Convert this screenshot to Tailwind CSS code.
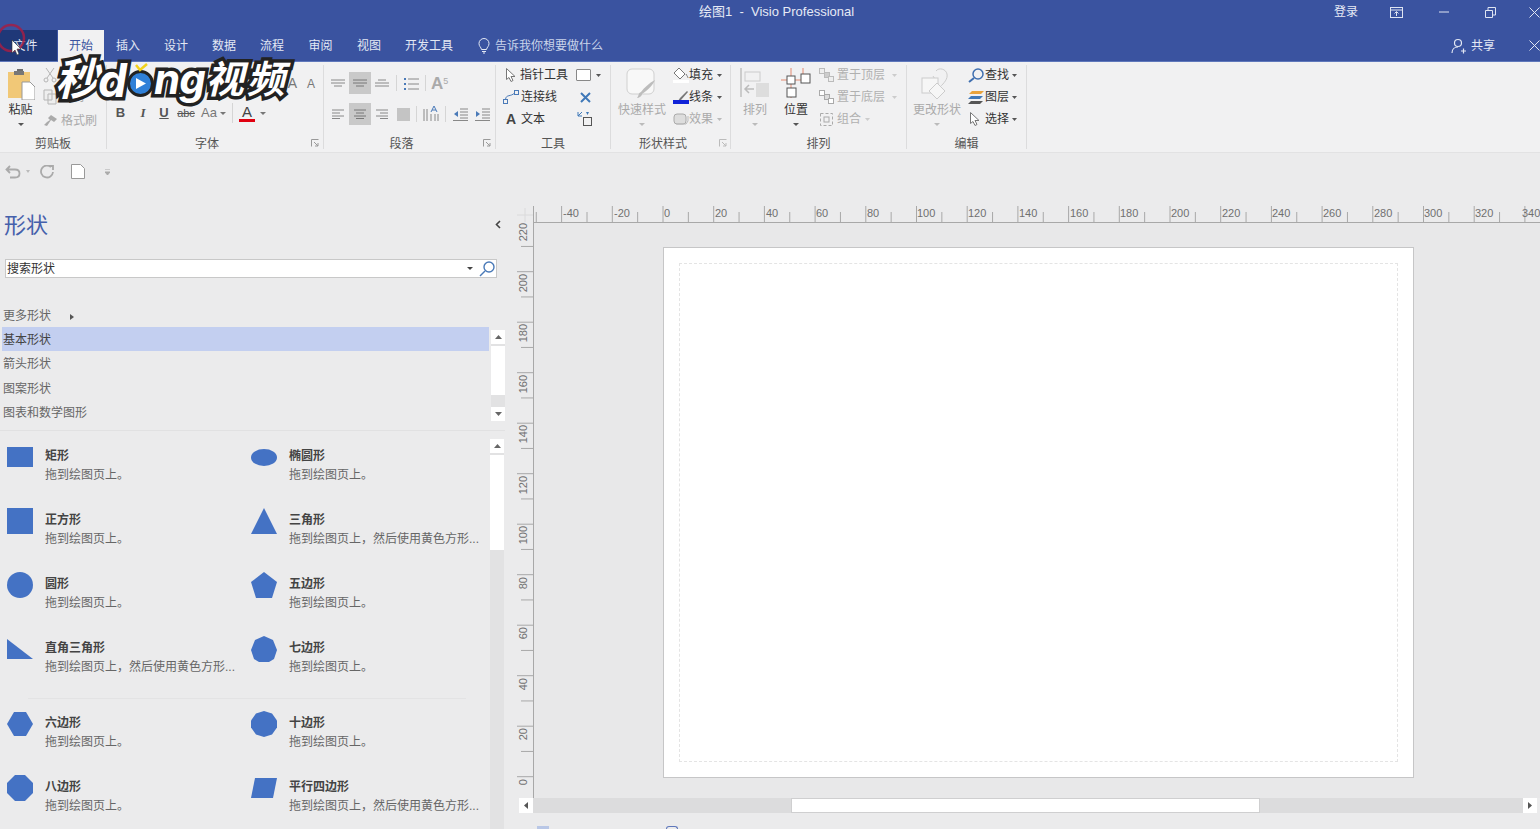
<!DOCTYPE html>
<html lang="zh">
<head>
<meta charset="utf-8">
<title>绘图1 - Visio Professional</title>
<script src="https://cdn.jsdelivr.net/npm/@tailwindcss/browser@4"></script>
</head>
<body class="w-[1540px] h-[829px] overflow-hidden relative bg-[#ebebec] font-['Liberation_Sans','Noto_Sans_CJK_SC',sans-serif] text-[12px] text-[#444]">

<!-- title bar -->
<header class="h-[30px] bg-[#3a53a0] flex items-center pb-[6px] text-[#e6eaf5] text-[13px] relative">
  <div class="w-[699px]"></div>
  <div class="w-[624px] whitespace-pre">绘图1  -  Visio Professional</div>
  <div class="w-[46px] text-center text-[12px]">登录</div>
  <div class="w-[27px] ml-[14px] flex justify-center"><svg width="13" height="11" viewBox="0 0 13 11" fill="none" stroke="#dfe5f2"><rect x=".5" y=".5" width="12" height="10"/><path d="M.5 3h12M6.500 9V5M4.500 6.500l2-2 2 2"/></svg></div>
  <div class="w-[11px]"></div>
  <div class="w-[46px] flex justify-center"><svg width="10" height="2"><path d="M0 1h10" stroke="#dfe5f2"/></svg></div>
  <div class="w-[46px] flex justify-center"><svg width="11" height="11" fill="none" stroke="#dfe5f2"><path d="M.5 3.500h7v7h-7zM3 3V.5h7.500V8H8"/></svg></div>
  <div class="flex-1 flex justify-end"><svg width="11" height="11" stroke="#dfe5f2"><path d="M.5.500l10 10M10.500.500l-10 10"/></svg></div>
</header>

<!-- tabs -->
<nav class="h-[32px] bg-[#3a53a0] flex items-stretch text-[#e3e8f4] border-b border-[#5f78bb]">
  <div class="w-[57px] bg-[#1f3878] flex items-center justify-center pr-[6px]">文件</div>
  <div class="w-px"></div>
  <div class="w-[46px] bg-[#f1f1f2] text-[#3a53a0] flex items-center justify-center h-[32px]">开始</div>
  <div class="w-[48px] flex items-center justify-center">插入</div>
  <div class="w-[48px] flex items-center justify-center">设计</div>
  <div class="w-[48px] flex items-center justify-center">数据</div>
  <div class="w-[48px] flex items-center justify-center">流程</div>
  <div class="w-[49px] flex items-center justify-center">审阅</div>
  <div class="w-[48px] flex items-center justify-center">视图</div>
  <div class="w-[72px] flex items-center justify-center">开发工具</div>
  <div class="ml-[13px] flex items-center gap-[5px] text-[#c9d3ea]">
    <svg width="12" height="16" viewBox="0 0 12 16" fill="none" stroke="#e3e8f4"><path d="M3.500 11.500C3 9 1 8.500 1 5.500a5 5 0 0 1 10 0c0 3-2 3.500-2.500 6zM4 13.500h4M5 15h2"/></svg>
    <span>告诉我你想要做什么</span>
  </div>
  <div class="ml-auto flex items-center gap-[4px] w-[74px] text-[#e3e8f4]">
    <svg width="16" height="16" viewBox="0 0 16 16" fill="none" stroke="#e3e8f4" stroke-width="1.200"><circle cx="7" cy="5" r="3.500"/><path d="M1 15c0-4 3-6 6-6M10 13h5M12.500 10.500v5"/></svg>
    <span>共享</span>
  </div>
  <div class="w-[15px] flex items-center justify-end"><svg width="11" height="11" stroke="#dfe5f2"><path d="M.5.500l10 10M10.500.500l-10 10"/></svg></div>
</nav>

<!-- ribbon -->
<section class="h-[91px] bg-[#f1f1f2] flex py-[3px] border-b border-[#e2e2e3]">

  <!-- clipboard -->
  <div class="w-[107px] flex flex-col border-r border-[#dcdcdd]">
    <div class="h-[72px] shrink-0 flex">
      <div class="w-[40px] flex flex-col items-center pl-[1px] pt-[3px]">
        <svg width="28" height="32" viewBox="0 0 28 32"><path d="M10 1h6v3h4v3H6V4h4z" fill="#6d6d6d"/><rect x="1" y="4" width="22" height="26" fill="#f1c877"/><rect x="7" y="3" width="10" height="4" fill="#777"/><path d="M15 14h8l5 5v13H15z" fill="#fff" stroke="#999"/></svg>
        <div class="mt-[1px] leading-[18px] text-[#333]">粘贴</div>
        <svg class="mt-[4px]" width="6" height="3"><path d="M0 0h6L3 3z" fill="#555"/></svg>
      </div>
      <div class="flex flex-col -mt-px text-[#aaa]">
        <div class="h-[22px] flex items-center gap-[3px] pl-[3px]"><svg width="14" height="16" viewBox="0 0 14 16" fill="none" stroke="#b5b5b5"><path d="M3 1l7 10M11 1L4 11"/><circle cx="3" cy="13" r="2"/><circle cx="11" cy="13" r="2"/></svg><span>剪切</span></div>
        <div class="h-[22px] flex items-center gap-[3px] pl-[3px]"><svg width="14" height="16" viewBox="0 0 14 16" fill="#eee" stroke="#b5b5b5"><path d="M1 1h8v10H1zM5 5h8v10H5z"/></svg><span>复制</span></div>
        <div class="h-[22px] mt-[2px] flex items-center gap-[4px] pl-[3px]"><svg width="14" height="12" viewBox="0 0 14 12" fill="#aaa"><path d="M8 0l6 4-3 3-3-2-2 3-2 3-3-1 3-3 3-2-2-2z"/></svg><span>格式刷</span></div>
      </div>
    </div>
    <div class="shrink-0 text-center leading-[14px] text-[#555]">剪贴板</div>
  </div>

  <!-- font -->
  <div class="w-[217px] flex flex-col border-r border-[#dcdcdd] relative">
    <div class="h-[72px] shrink-0 flex flex-col">
      <div class="h-[31px] flex items-center justify-end gap-[10px] pr-[8px] pt-[6px] text-[14px] text-[#777]"><span>A</span><span class="text-[12px]">A</span></div>
      <div class="h-[34px] flex items-center pl-[2px] text-[13px] text-[#555]">
        <b class="w-[23px] text-center">B</b>
        <i class="w-[22px] text-center font-bold font-['Liberation_Serif',serif]">I</i>
        <u class="w-[20px] text-center font-bold">U</u>
        <s class="w-[24px] text-center text-[11px]">abc</s>
        <span class="w-[22px] text-center text-[#777]">Aa</span>
        <svg width="6" height="3"><path d="M0 0h6L3 3z" fill="#777"/></svg>
        <div class="w-px h-[20px] bg-[#d5d5d5] ml-[6px]"></div>
        <span class="ml-[6px] w-[16px] flex flex-col items-center text-[15px] leading-[14px] text-[#444]">A<span class="block w-[16px] h-[3px] bg-[#e00010]"></span></span>
        <svg class="ml-[5px]" width="6" height="3"><path d="M0 0h6L3 3z" fill="#777"/></svg>
      </div>
    </div>
    <div class="shrink-0 flex leading-[14px] text-[#555]"><span class="w-[200px] text-center">字体</span><svg class="ml-[4px] mt-[2px]" width="8" height="8" fill="none" stroke="#999"><path d="M.5 7.500v-7h7M3 3l4 4M7 4v3H4"/></svg></div>
  </div>

  <!-- paragraph -->
  <div class="w-[172px] flex flex-col border-r border-[#dcdcdd]">
    <div class="h-[72px] shrink-0 flex flex-col pl-[3px]">
      <div class="h-[22px] mt-[7px] flex items-center text-[#888]">
        <div class="w-[22px] flex justify-center"><svg width="14" height="9" stroke="#888"><path d="M0 1h14M0 4h14M3 7h8" fill="none"/></svg></div>
        <div class="w-[22px] h-[22px] bg-[#c9c9c9] flex items-center justify-center"><svg width="14" height="9" stroke="#777"><path d="M0 1h14M0 4h14M3 7h8"/></svg></div>
        <div class="w-[22px] flex justify-center"><svg width="14" height="9" stroke="#888"><path d="M3 1h8M0 4h14M0 7h14"/></svg></div>
        <div class="w-px h-[16px] bg-[#d5d5d5] ml-[3px]"></div>
        <div class="w-[28px] flex justify-center"><svg width="15" height="13"><path d="M0 1h2v2H0zM0 6h2v2H0zM0 11h2v2H0z" fill="#4a7ab8"/><path d="M4 2h11M4 7h11M4 12h11" stroke="#888"/></svg></div>
        <div class="w-px h-[16px] bg-[#d5d5d5]"></div>
        <div class="ml-[5px] text-[17px] font-bold text-[#aaa] leading-none">A<sup class="text-[9px] font-normal">5</sup></div>
      </div>
      <div class="h-[22px] mt-[9px] flex items-center">
        <div class="w-[22px] flex justify-center"><svg width="12" height="10" stroke="#888"><path d="M0 1h12M0 4h8M0 7h12M0 9.500h8"/></svg></div>
        <div class="w-[22px] h-[22px] bg-[#c9c9c9] flex items-center justify-center"><svg width="12" height="10" stroke="#777"><path d="M0 1h12M2 4h8M0 7h12M2 9.500h8"/></svg></div>
        <div class="w-[22px] flex justify-center"><svg width="12" height="10" stroke="#888"><path d="M0 1h12M4 4h8M0 7h12M4 9.500h8"/></svg></div>
        <div class="w-[20px] flex justify-center"><div class="w-[13px] h-[13px] bg-[#c4c4c4]"></div></div>
        <div class="w-px h-[16px] bg-[#d5d5d5] ml-[3px]"></div>
        <div class="w-[28px] flex justify-center"><svg width="16" height="16"><path d="M1 3v12M4 3v12M8 8v7M12 8v7M15 8v7" stroke="#888"/><path d="M8 6l3-6 3 6M9 4h4" stroke="#4a7ab8" fill="none"/></svg></div>
        <div class="w-px h-[16px] bg-[#d5d5d5]"></div>
        <div class="w-[28px] flex justify-center"><svg width="15" height="13"><path d="M7 1h8M7 4h8M7 7h8M7 10h8M0 12.500h15" stroke="#888"/><path d="M5 3L1 6l4 3z" fill="#4a7ab8"/></svg></div>
        <div class="w-[16px] flex justify-center"><svg width="15" height="13"><path d="M7 1h8M7 4h8M7 7h8M7 10h8M0 12.500h15" stroke="#888"/><path d="M1 3l4 3-4 3z" fill="#4a7ab8"/></svg></div>
      </div>
    </div>
    <div class="shrink-0 flex leading-[14px] text-[#555]"><span class="w-[155px] text-center">段落</span><svg class="ml-[4px] mt-[2px]" width="8" height="8" fill="none" stroke="#999"><path d="M.5 7.500v-7h7M3 3l4 4M7 4v3H4"/></svg></div>
  </div>

  <!-- tools -->
  <div class="w-[115px] flex flex-col border-r border-[#dcdcdd]">
    <div class="h-[72px] shrink-0 flex flex-col text-[#333]">
      <div class="h-[22px] -mt-px flex items-center pl-[10px]">
        <svg width="10" height="14" viewBox="0 0 10 14" fill="#fff" stroke="#777"><path d="M.5.500v11l2.500-2 2 4 2-1-2-4h4z"/></svg>
        <span class="ml-[4px]">指针工具</span>
        <div class="ml-[8px] w-[15px] h-[12px] bg-white border border-[#888] rounded-[1px]"></div>
        <svg class="ml-[5px]" width="5" height="3"><path d="M0 0h5L2.500 3z" fill="#555"/></svg>
      </div>
      <div class="h-[22px] flex items-center pl-[7px]">
        <svg width="16" height="14" viewBox="0 0 16 14" fill="none" stroke="#4a7ab8"><rect x=".5" y="9.500" width="4" height="4"/><rect x="11.500" y=".5" width="4" height="4"/><path d="M2.500 9.500C3 4 8 7 11.500 3"/></svg>
        <span class="ml-[2px]">连接线</span>
        <svg class="ml-[23px]" width="11" height="11" stroke="#3f78b8" stroke-width="2"><path d="M1 1l9 9M10 1l-9 9"/></svg>
      </div>
      <div class="h-[22px] flex items-center pl-[10px]">
        <span class="font-bold text-[14px] w-[10px] text-[#444]">A</span>
        <span class="ml-[5px]">文本</span>
        <svg class="ml-[32px]" width="16" height="16" viewBox="0 0 16 16" fill="none"><rect x="6.500" y="6.500" width="8" height="8" stroke="#555"/><path d="M5 1L1 5M1 1v4h4" stroke="#3f78b8"/><path d="M9 1h3l-1.500 3z" fill="#3f78b8"/></svg>
      </div>
    </div>
    <div class="shrink-0 text-center leading-[14px] text-[#555]">工具</div>
  </div>

  <!-- shape styles -->
  <div class="w-[120px] flex flex-col border-r border-[#dcdcdd]">
    <div class="h-[72px] shrink-0 flex">
      <div class="w-[62px] flex flex-col items-center pt-[3px] text-[#aaa]">
        <svg width="32" height="31" viewBox="0 0 32 31" fill="none"><rect x="1" y="1" width="27" height="25" rx="5" fill="#f8f8f8" stroke="#d0d0d0"/><path d="M29 12c-2 5-6 9-13 14 0 2-3 4-5 4 2-2 1-5 4-6 3-4 8-9 14-12z" fill="#bdbdbd"/></svg>
        <div class="mt-[2px] leading-[18px] whitespace-nowrap">快速样式</div>
        <svg class="mt-[4px]" width="6" height="3"><path d="M0 0h6L3 3z" fill="#bbb"/></svg>
      </div>
      <div class="flex flex-col -mt-px text-[#333]">
        <div class="h-[22px] flex items-center"><svg width="16" height="16" viewBox="0 0 16 16"><path d="M6 1l6 6-5 5-6-6z" fill="#fff" stroke="#777"/><path d="M13 7c1 2 2 3 2 4" fill="none" stroke="#777"/><rect y="13" width="16" height="3" fill="#fff"/></svg><span>填充</span><svg class="ml-[4px]" width="5" height="3"><path d="M0 0h5L2.500 3z" fill="#555"/></svg></div>
        <div class="h-[22px] flex items-center"><svg width="16" height="15" viewBox="0 0 16 15"><path d="M14 1L7 8l-2 3 3-1 7-8z" fill="#777"/><rect y="10" width="16" height="4" fill="#1023d8"/></svg><span>线条</span><svg class="ml-[4px]" width="5" height="3"><path d="M0 0h5L2.500 3z" fill="#555"/></svg></div>
        <div class="h-[22px] flex items-center text-[#aaa]"><svg width="16" height="14" viewBox="0 0 16 14"><rect x="1" y="2" width="12" height="10" rx="3" fill="#ddd" stroke="#aaa"/><path d="M3 12h10l2-3V4" fill="none" stroke="#bbb"/></svg><span>效果</span><svg class="ml-[4px]" width="5" height="3"><path d="M0 0h5L2.500 3z" fill="#bbb"/></svg></div>
      </div>
    </div>
    <div class="shrink-0 flex leading-[14px] text-[#555]"><span class="w-[104px] text-center">形状样式</span><svg class="ml-[4px] mt-[2px]" width="8" height="8" fill="none" stroke="#bbb"><path d="M.5 7.500v-7h7M3 3l4 4M7 4v3H4"/></svg></div>
  </div>

  <!-- arrange -->
  <div class="w-[176px] flex flex-col border-r border-[#dcdcdd]">
    <div class="h-[72px] shrink-0 flex">
      <div class="w-[48px] flex flex-col items-center pt-[3px] text-[#aaa]">
        <svg width="31" height="31" viewBox="0 0 31 31" fill="none"><path d="M1 0v29" stroke="#ccc" stroke-width="2"/><rect x="5" y="4" width="15" height="9" stroke="#ccc"/><rect x="16" y="15" width="13" height="14" fill="#ddd"/><path d="M14 21H5M9 17l-4 4 4 4" stroke="#bbb" stroke-width="1.500"/></svg>
        <div class="mt-[2px] leading-[18px]">排列</div>
        <svg class="mt-[4px]" width="6" height="3"><path d="M0 0h6L3 3z" fill="#bbb"/></svg>
      </div>
      <div class="w-[34px] flex flex-col items-center pt-[3px] text-[#333]">
        <svg width="31" height="31" viewBox="0 0 31 31" fill="none"><path d="M0 12h22M10 0v30M22 0v8" stroke="#e38a70"/><rect x="6" y="8" width="8" height="8" fill="#fff" stroke="#555"/><rect x="20" y="6" width="9" height="9" fill="#fff" stroke="#555"/><rect x="6" y="20" width="9" height="9" fill="#fff" stroke="#555"/></svg>
        <div class="mt-[2px] leading-[18px]">位置</div>
        <svg class="mt-[4px]" width="6" height="3"><path d="M0 0h6L3 3z" fill="#555"/></svg>
      </div>
      <div class="flex flex-col -mt-px text-[#b0b0b0] ml-[6px] whitespace-nowrap">
        <div class="h-[22px] flex items-center"><svg width="15" height="14" viewBox="0 0 15 14" fill="#eee" stroke="#bbb"><rect x=".5" y=".5" width="5" height="5"/><rect x="5.500" y="4.500" width="5" height="5" fill="#ccc"/><rect x="9.500" y="8.500" width="5" height="5"/></svg><span class="ml-[3px]">置于顶层</span><svg class="ml-[7px]" width="5" height="3"><path d="M0 0h5L2.500 3z" fill="#ccc"/></svg></div>
        <div class="h-[22px] flex items-center"><svg width="15" height="14" viewBox="0 0 15 14" fill="#ddd" stroke="#aaa"><rect x=".5" y=".5" width="5" height="5" fill="#fff"/><rect x="5.500" y="4.500" width="5" height="5"/><rect x="9.500" y="8.500" width="5" height="5" fill="#fff"/></svg><span class="ml-[3px]">置于底层</span><svg class="ml-[7px]" width="5" height="3"><path d="M0 0h5L2.500 3z" fill="#ccc"/></svg></div>
        <div class="h-[22px] flex items-center"><svg width="15" height="15" viewBox="0 0 15 15" fill="none" stroke="#aaa"><rect x="1.500" y="1.500" width="12" height="12" stroke-dasharray="3 2"/><rect x="5" y="5" width="5" height="5"/></svg><span class="ml-[3px]">组合</span><svg class="ml-[4px]" width="5" height="3"><path d="M0 0h5L2.500 3z" fill="#ccc"/></svg></div>
      </div>
    </div>
    <div class="shrink-0 text-center leading-[14px] text-[#555]">排列</div>
  </div>

  <!-- edit -->
  <div class="w-[120px] flex flex-col border-r border-[#dcdcdd]">
    <div class="h-[72px] shrink-0 flex">
      <div class="w-[60px] flex flex-col items-center pt-[3px] text-[#aaa]">
        <svg width="32" height="32" viewBox="0 0 32 32" fill="none" stroke="#ccc"><path d="M15 3c3-4 10-2 11 3 1 5-3 9-7 13L12 8"/><rect x="1" y="10" width="16" height="15" fill="#f6f6f6"/><path d="M16 15l8 8-8 8-8-8z" fill="#f6f6f6"/></svg>
        <div class="mt-[1px] leading-[18px] whitespace-nowrap">更改形状</div>
        <svg class="mt-[4px]" width="6" height="3"><path d="M0 0h6L3 3z" fill="#bbb"/></svg>
      </div>
      <div class="flex flex-col -mt-px text-[#333]">
        <div class="h-[22px] flex items-center"><svg class="ml-[1px]" width="16" height="15" viewBox="0 0 16 15" fill="none"><circle cx="10" cy="6" r="5" stroke="#3f6fb0" stroke-width="1.500"/><path d="M6 10l-5 4" stroke="#3f6fb0" stroke-width="2"/></svg><span class="ml-[1px]">查找</span><svg class="ml-[3px]" width="5" height="3"><path d="M0 0h5L2.500 3z" fill="#555"/></svg></div>
        <div class="h-[22px] flex items-center"><svg class="ml-[1px]" width="16" height="15" viewBox="0 0 16 15"><path d="M4 1h12l-3 3H1z" fill="#e8a33d"/><path d="M3 6h12l-3 3H0z" fill="#3f78b8"/><path d="M3 11h12l-3 3H0z" fill="#555"/></svg><span class="ml-[1px]">图层</span><svg class="ml-[3px]" width="5" height="3"><path d="M0 0h5L2.500 3z" fill="#555"/></svg></div>
        <div class="h-[22px] flex items-center"><svg class="ml-[3px]" width="10" height="14" viewBox="0 0 10 14" fill="#fff" stroke="#777"><path d="M.5.500v11l2.500-2 2 4 2-1-2-4h4z"/></svg><span class="ml-[5px]">选择</span><svg class="ml-[3px]" width="5" height="3"><path d="M0 0h5L2.500 3z" fill="#555"/></svg></div>
      </div>
    </div>
    <div class="shrink-0 text-center leading-[14px] text-[#555]">编辑</div>
  </div>
</section>

<!-- quick access -->
<div class="h-[37px] flex items-center pl-[5px]">
  <svg width="16" height="14" viewBox="0 0 16 14" fill="none" stroke="#aaa" stroke-width="1.800"><path d="M5 1L1.500 4.500 5 8M2 4.500h8c6 0 6 8 0 8H5"/></svg>
  <svg class="ml-[5px]" width="4" height="3"><path d="M0 0h4L2 3z" fill="#bbb"/></svg>
  <svg class="ml-[10px]" width="14" height="14" viewBox="0 0 14 14" fill="none" stroke="#aaa" stroke-width="1.800"><path d="M11 2a6 6 0 1 0 2 5M9 1h4v4"/></svg>
  <svg class="ml-[17px]" width="14" height="15" viewBox="0 0 14 15" fill="#fff" stroke="#999"><path d="M.5.500h9l4 4v10H.5z"/></svg>
  <svg class="ml-[20px]" width="5" height="6"><path d="M0 0h5M0 3h5L2.500 6z" stroke="#aaa" fill="#aaa"/></svg>
</div>

<!-- main -->
<main class="h-[639px] flex">

  <!-- shapes panel -->
  <aside class="w-[517px] shrink-0 flex flex-col overflow-hidden">
    <div class="h-[69px] shrink-0 w-[505px] flex items-center pl-[4px] pt-[1px]">
      <h1 class="text-[22px] text-[#4560ab]">形状</h1>
      <svg class="ml-auto mr-[4px] -mt-[2px]" width="6" height="9" fill="none" stroke="#444" stroke-width="1.600"><path d="M5 1L1.500 4.500 5 8"/></svg>
    </div>
    <div class="ml-[5px] w-[492px] h-[19px] shrink-0 bg-white border border-[#c8c8c8] flex items-center pl-[1px] text-[#333]">
      <span>搜索形状</span>
      <svg class="ml-auto" width="6" height="3"><path d="M0 0h6L3 3z" fill="#444"/></svg>
      <svg class="ml-[6px] mr-[1px]" width="16" height="16" viewBox="0 0 16 16" fill="none" stroke="#4a7ab8" stroke-width="1.400"><circle cx="10" cy="6" r="5"/><path d="M6 10l-5 5"/></svg>
    </div>
    <div class="h-[38px] shrink-0 w-[505px] flex items-end pl-[3px] text-[#666] leading-[20px]"><span class="-mb-[10px]">更多形状</span><svg class="ml-[19px] -mb-[4px]" width="4" height="6"><path d="M0 0l4 3-4 3z" fill="#555"/></svg></div>
    <div class="flex shrink-0 w-[505px] h-[104px] mt-[11px] border-b border-[#e1e1e2]">
      <div class="w-[487px] ml-[2px] text-[#666]">
        <div class="h-[24px] bg-[#c3cff0] flex items-center pl-[1px] pt-[1px] text-[#444]">基本形状</div>
        <div class="h-[25px] flex items-center pl-[1px] pt-[1px]">箭头形状</div>
        <div class="h-[24px] flex items-center pl-[1px] pt-[1px]">图案形状</div>
        <div class="h-[25px] flex items-center pl-[1px] pt-[1px]">图表和数学图形</div>
      </div>
      <div class="w-[14px] ml-[2px] mt-[3px] flex flex-col bg-[#e2e2e3] h-[91px]">
        <div class="h-[14px] bg-white flex items-center justify-center"><svg width="7" height="4"><path d="M0 4h7L3.500 0z" fill="#666"/></svg></div>
        <div class="mt-[2px] h-[49px] bg-white"></div>
        <div class="mt-auto h-[14px] bg-white flex items-center justify-center"><svg width="7" height="4"><path d="M0 0h7L3.500 4z" fill="#666"/></svg></div>
      </div>
    </div>
    <div class="flex w-[505px] flex-1 min-h-0">
      <div class="w-[490px] pt-[13px] pl-[7px]">
        <div class="grid grid-cols-[244px_237px] auto-rows-[64px]">
          <div class="flex"><div class="w-[26px] h-[26px] flex items-center justify-center"><div class="w-[26px] h-[20px] bg-[#4472c4]"></div></div><div class="ml-[12px] pt-[3px] leading-[19px]"><b class="block text-[#444]">矩形</b><span class="text-[#666]">拖到绘图页上。</span></div></div>
          <div class="flex"><div class="w-[26px] h-[26px] flex items-center justify-center"><div class="w-[26px] h-[17px] rounded-[50%] bg-[#4472c4]"></div></div><div class="ml-[12px] pt-[3px] leading-[19px]"><b class="block text-[#444]">椭圆形</b><span class="text-[#666]">拖到绘图页上。</span></div></div>
          <div class="flex"><div class="w-[26px] h-[26px] bg-[#4472c4]"></div><div class="ml-[12px] pt-[3px] leading-[19px]"><b class="block text-[#444]">正方形</b><span class="text-[#666]">拖到绘图页上。</span></div></div>
          <div class="flex"><svg width="26" height="26" viewBox="0 0 26 26"><path d="M13 0l13 26H0z" fill="#4472c4"/></svg><div class="ml-[12px] pt-[3px] leading-[19px]"><b class="block text-[#444]">三角形</b><span class="text-[#666] whitespace-nowrap">拖到绘图页上，然后使用黄色方形...</span></div></div>
          <div class="flex"><div class="w-[26px] h-[26px] rounded-full bg-[#4472c4]"></div><div class="ml-[12px] pt-[3px] leading-[19px]"><b class="block text-[#444]">圆形</b><span class="text-[#666]">拖到绘图页上。</span></div></div>
          <div class="flex"><svg width="26" height="26" viewBox="0 0 26 26"><path d="M13 0l13 10-5 16H5L0 10z" fill="#4472c4"/></svg><div class="ml-[12px] pt-[3px] leading-[19px]"><b class="block text-[#444]">五边形</b><span class="text-[#666]">拖到绘图页上。</span></div></div>
          <div class="flex"><svg width="26" height="26" viewBox="0 0 26 26"><path d="M0 3l26 20H0z" fill="#4472c4"/></svg><div class="ml-[12px] pt-[3px] leading-[19px]"><b class="block text-[#444]">直角三角形</b><span class="text-[#666] whitespace-nowrap">拖到绘图页上，然后使用黄色方形...</span></div></div>
          <div class="flex"><svg width="26" height="26" viewBox="0 0 26 26"><path d="M13 0l9 4 4 10-3 9-5 3H8l-5-3-3-9L4 4z" fill="#4472c4"/></svg><div class="ml-[12px] pt-[3px] leading-[19px]"><b class="block text-[#444]">七边形</b><span class="text-[#666]">拖到绘图页上。</span></div></div>
        </div>
        <div class="h-px w-[438px] ml-[21px] -mt-[2px] bg-[#e3e3e4]"></div>
        <div class="grid grid-cols-[244px_237px] auto-rows-[64px] mt-[12px]">
          <div class="flex"><svg width="26" height="26" viewBox="0 0 26 26"><path d="M7 1h12l7 12-7 12H7L0 13z" fill="#4472c4"/></svg><div class="ml-[12px] pt-[3px] leading-[19px]"><b class="block text-[#444]">六边形</b><span class="text-[#666]">拖到绘图页上。</span></div></div>
          <div class="flex"><svg width="26" height="26" viewBox="0 0 26 26"><path d="M13 0l8 2.500 5 7v7l-5 7-8 2.500-8-2.500-5-7v-7l5-7z" fill="#4472c4"/></svg><div class="ml-[12px] pt-[3px] leading-[19px]"><b class="block text-[#444]">十边形</b><span class="text-[#666]">拖到绘图页上。</span></div></div>
          <div class="flex"><svg width="26" height="26" viewBox="0 0 26 26"><path d="M8 0h10l8 8v10l-8 8H8l-8-8V8z" fill="#4472c4"/></svg><div class="ml-[12px] pt-[3px] leading-[19px]"><b class="block text-[#444]">八边形</b><span class="text-[#666]">拖到绘图页上。</span></div></div>
          <div class="flex"><svg width="26" height="26" viewBox="0 0 26 26"><path d="M4 3h22l-4 20H0z" fill="#4472c4"/></svg><div class="ml-[12px] pt-[3px] leading-[19px]"><b class="block text-[#444] whitespace-nowrap">平行四边形</b><span class="text-[#666] whitespace-nowrap">拖到绘图页上，然后使用黄色方形...</span></div></div>
        </div>
      </div>
      <div class="w-[14px] bg-[#e2e2e3] mt-[8px] flex flex-col">
        <div class="h-[14px] shrink-0 bg-white flex items-center justify-center"><svg width="7" height="4"><path d="M0 4h7L3.500 0z" fill="#666"/></svg></div>
        <div class="mt-[2px] h-[95px] shrink-0 bg-white"></div>
      </div>
    </div>
  </aside>

  <!-- drawing area -->
  <div class="flex-1 flex flex-col pt-[16px]">
    <div class="h-[17px] shrink-0 flex">
      <svg class="shrink-0" width="16" height="17" viewBox="0 0 16 17" fill="none" stroke="#dadadb"><path d="M8 2v14M0 9h16"/></svg>
      <svg class="shrink-0" width="1007" height="17" viewBox="533 206 1007 17" stroke="#a8a8a8" fill="#707070" font-size="11">
        <path d="M533.500 206v17M533.500 222.500H1540" fill="none"/>
        <path fill="none" d="M536.250 212v10M587 212v10M637.650 212v10M688.350 212v10M739.050 212v10M789.750 212v10M840.450 212v10M891.150 212v10M941.850 212v10M992.550 212v10M1043.250 212v10M1093.950 212v10M1144.650 212v10M1195.350 212v10M1246.050 212v10M1296.750 212v10M1347.450 212v10M1398.150 212v10M1448.850 212v10M1499.550 212v10"/>
        <path fill="none" d="M561.600 206v16M612.300 206v16M663 206v16M713.700 206v16M764.400 206v16M815.100 206v16M865.800 206v16M916.500 206v16M967.200 206v16M1017.900 206v16M1068.600 206v16M1119.300 206v16M1170 206v16M1220.700 206v16M1271.400 206v16M1322.100 206v16M1372.800 206v16M1423.500 206v16M1474.200 206v16M1524.900 206v16"/>
        <g stroke="none">
          <text x="563" y="217">-40</text><text x="614" y="217">-20</text><text x="664" y="217">0</text><text x="715" y="217">20</text><text x="766" y="217">40</text><text x="816" y="217">60</text><text x="867" y="217">80</text><text x="917" y="217">100</text><text x="968" y="217">120</text><text x="1019" y="217">140</text><text x="1070" y="217">160</text><text x="1120" y="217">180</text><text x="1171" y="217">200</text><text x="1222" y="217">220</text><text x="1272" y="217">240</text><text x="1323" y="217">260</text><text x="1374" y="217">280</text><text x="1424" y="217">300</text><text x="1475" y="217">320</text><text x="1522" y="217">340</text>
        </g>
      </svg>
    </div>
    <div class="h-[575px] shrink-0 flex">
      <svg class="shrink-0" width="17" height="575" viewBox="517 223 17 575" stroke="#a8a8a8" fill="#707070" font-size="11">
        <path fill="none" d="M533.500 223v575"/>
        <path fill="none" d="M521 246.450h12M521 296.950h12M521 347.450h12M521 397.950h12M521 448.450h12M521 498.950h12M521 549.450h12M521 599.950h12M521 650.450h12M521 700.950h12M521 751.450h12"/>
        <path fill="none" d="M517 271.700h16M517 322.200h16M517 372.700h16M517 423.200h16M517 473.700h16M517 524.200h16M517 574.700h16M517 625.200h16M517 675.700h16M517 726.200h16M517 776.700h16"/>
        <g stroke="none" text-anchor="end">
          <text transform="translate(527 223) rotate(-90)">220</text>
          <text transform="translate(527 274) rotate(-90)">200</text>
          <text transform="translate(527 324) rotate(-90)">180</text>
          <text transform="translate(527 375) rotate(-90)">160</text>
          <text transform="translate(527 425) rotate(-90)">140</text>
          <text transform="translate(527 476) rotate(-90)">120</text>
          <text transform="translate(527 526) rotate(-90)">100</text>
          <text transform="translate(527 577) rotate(-90)">80</text>
          <text transform="translate(527 627) rotate(-90)">60</text>
          <text transform="translate(527 678) rotate(-90)">40</text>
          <text transform="translate(527 728) rotate(-90)">20</text>
          <text transform="translate(527 779) rotate(-90)">0</text>
        </g>
      </svg>
      <div class="flex-1 bg-[#e8e8e9] pl-[129px] pt-[24px]">
        <div class="w-[751px] h-[531px] bg-white border border-[#c6c6c7] pl-[15px] pr-[15px] py-[15px]">
          <div class="w-full h-full border border-dashed border-[#e4e4e4]"></div>
        </div>
      </div>
    </div>
    <div class="h-[15px] shrink-0 ml-[2px] mr-[3px] flex bg-[#dcdcdd]">
      <div class="w-[14px] bg-white flex items-center justify-center"><svg width="4" height="7"><path d="M4 0v7L0 3.500z" fill="#555"/></svg></div>
      <div class="ml-[258px] w-[469px] bg-white border border-[#cfcfd0]"></div>
      <div class="ml-auto w-[14px] bg-white flex items-center justify-center"><svg width="4" height="7"><path d="M0 0v7l4-3.500z" fill="#555"/></svg></div>
    </div>
    <div class="h-[16px] shrink-0 flex items-end pl-[20px] gap-[117px] overflow-hidden">
      <div class="w-[12px] h-[3px] bg-[#b9c7e6]"></div>
      <div class="w-[12px] h-[3px] rounded-t-full border-t border-x border-[#5f78bb]"></div>
    </div>
  </div>
</main>

<!-- video watermark -->
<div class="absolute left-[55px] top-[51px] h-[58px] flex items-center text-white font-bold italic text-[44px] leading-none [-webkit-text-stroke:7px_#222] [paint-order:stroke_fill] pointer-events-none">
  <span>秒</span>
  <span class="font-['Inter',sans-serif] text-[46px] -ml-[1px]">d</span>
  <span class="relative w-[27px] h-[27px] mt-[6px] rounded-full bg-[#2f80d8] border-[3px] border-[#222] flex items-center justify-center">
    <svg width="13" height="13"><path d="M2 1l10 5.500-10 5.500z" fill="#fff"/></svg>
    <svg class="absolute -top-[10px] left-[5px]" width="14" height="10"><path d="M1 2l4 5 7-6" fill="none" stroke="#f2d21c" stroke-width="2.500"/></svg>
  </span>
  <span class="font-['Inter',sans-serif] text-[42px] -mt-[2px] tracking-[-1px]">ng</span>
  <span class="ml-[1px] text-[38px] tracking-[3px]">视频</span>
</div>

<!-- pointer highlight over the File tab -->
<svg class="absolute left-0 top-[22px] overflow-visible pointer-events-none" width="30" height="36" viewBox="0 0 30 36" fill="none">
  <circle cx="11" cy="16" r="13" stroke="#a31f45" stroke-width="2.500" opacity=".85"/>
  <path d="M12 18v13l3-3 2 5 2-1-2-5h4z" fill="#fff" stroke="#333" stroke-width=".6"/>
</svg>
</body>
</html>
